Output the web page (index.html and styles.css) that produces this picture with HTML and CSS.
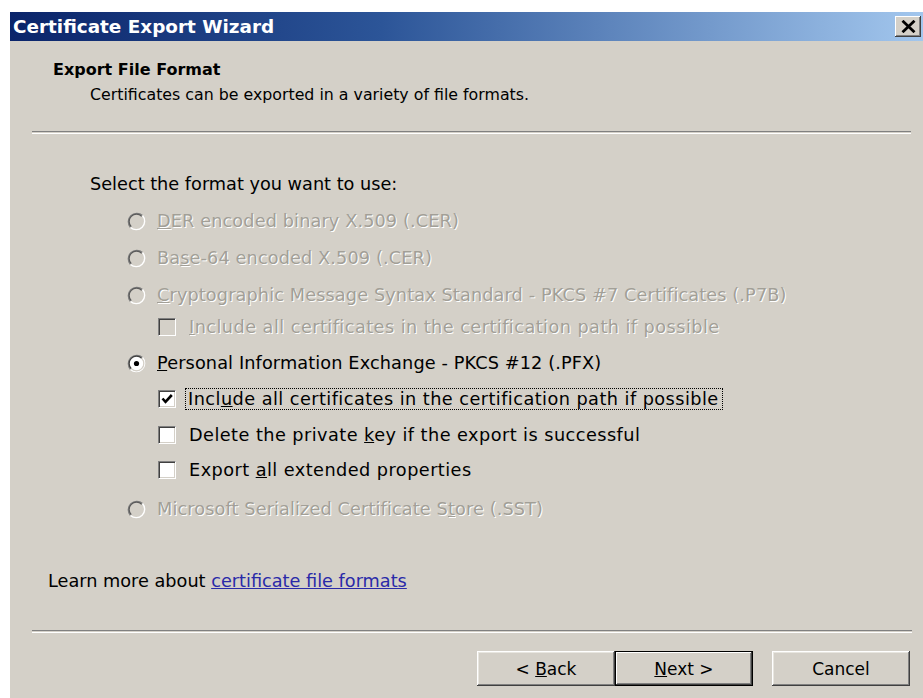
FILE: index.html
```html
<!DOCTYPE html>
<html>
<head>
<meta charset="utf-8">
<title>Certificate Export Wizard</title>
<link rel="stylesheet" href="styles.css">
</head>
<body>
<svg class="defs" width="0" height="0" aria-hidden="true">
  <defs>
    <symbol id="radio-off" viewBox="0 0 19 19">
      <circle cx="9.5" cy="9.5" r="7" fill="#d4d0c8"/>
      <path d="M3.5 15.5 A8.5 8.5 0 0 1 15.5 3.5" fill="none" stroke="#808080" stroke-width="1.4"/>
      <path d="M15.5 3.5 A8.5 8.5 0 0 1 3.5 15.5" fill="none" stroke="#ffffff" stroke-width="1.4"/>
      <path d="M4.3 14.7 A7.3 7.3 0 0 1 14.7 4.3" fill="none" stroke="#5a5a5a" stroke-width="1.2"/>
    </symbol>
    <symbol id="radio-on" viewBox="0 0 19 19">
      <circle cx="9.5" cy="9.5" r="7" fill="#ffffff"/>
      <path d="M3.5 15.5 A8.5 8.5 0 0 1 15.5 3.5" fill="none" stroke="#808080" stroke-width="1.4"/>
      <path d="M15.5 3.5 A8.5 8.5 0 0 1 3.5 15.5" fill="none" stroke="#ffffff" stroke-width="1.4"/>
      <path d="M4.3 14.7 A7.3 7.3 0 0 1 14.7 4.3" fill="none" stroke="#404040" stroke-width="1.2"/>
      <path d="M14.7 4.3 A7.3 7.3 0 0 1 4.3 14.7" fill="none" stroke="#d4d0c8" stroke-width="1.2"/>
      <circle cx="9.5" cy="9.5" r="2.6" fill="#000"/>
    </symbol>
  </defs>
</svg>

<div class="window">
  <div class="titlebar">
    <span class="title">Certificate Export Wizard</span>
    <span class="close">
      <svg width="15" height="13" viewBox="0 0 15 13"><path d="M1.5 0.8 L13.5 12.2 M13.5 0.8 L1.5 12.2" stroke="#000" stroke-width="2.8"/></svg>
    </span>
  </div>

  <div class="header">
    <div class="header-title">Export File Format</div>
    <div class="header-desc">Certificates can be exported in a variety of file formats.</div>
  </div>
  <div class="etched"></div>

  <div class="content">
    <div class="prompt">Select the format you want to use:</div>

    <div class="option radio disabled">
      <svg class="radio-icon"><use href="#radio-off"/></svg>
      <span class="label"><u>D</u>ER encoded binary X.509 (.CER)</span>
    </div>
    <div class="option radio disabled">
      <svg class="radio-icon"><use href="#radio-off"/></svg>
      <span class="label">Ba<u>s</u>e-64 encoded X.509 (.CER)</span>
    </div>
    <div class="option radio disabled">
      <svg class="radio-icon"><use href="#radio-off"/></svg>
      <span class="label"><u>C</u>ryptographic Message Syntax Standard - PKCS #7 Certificates (.P7B)</span>
    </div>
    <div class="option check disabled">
      <span class="checkbox off"></span>
      <span class="label"><u>I</u>nclude all certificates in the certification path if possible</span>
    </div>
    <div class="option radio">
      <svg class="radio-icon"><use href="#radio-on"/></svg>
      <span class="label"><u>P</u>ersonal Information Exchange - PKCS #12 (.PFX)</span>
    </div>
    <div class="option check">
      <span class="checkbox">
        <svg width="14" height="14" viewBox="0 0 14 14"><path d="M2.5 6.5 L5.5 9.8 L11.8 3" fill="none" stroke="#000" stroke-width="2.6"/></svg>
      </span>
      <span class="label focus">Incl<u>u</u>de all certificates in the certification path if possible</span>
    </div>
    <div class="option check">
      <span class="checkbox"></span>
      <span class="label">Delete the private <u>k</u>ey if the export is successful</span>
    </div>
    <div class="option check tight">
      <span class="checkbox"></span>
      <span class="label">Export <u>a</u>ll extended properties</span>
    </div>
    <div class="option radio disabled last">
      <svg class="radio-icon"><use href="#radio-off"/></svg>
      <span class="label">Microsoft Serialized Certificate S<u>t</u>ore (.SST)</span>
    </div>

    <div class="learn">Learn more about <a href="#" class="link">certificate file formats</a></div>
  </div>

  <div class="etched bottom"></div>

  <div class="buttons">
    <button class="btn">&lt; <u>B</u>ack</button>
    <button class="btn default"><u>N</u>ext &gt;</button>
    <button class="btn cancel">Cancel</button>
  </div>
</div>
</body>
</html>
```

FILE: styles.css
```css
html, body {
  margin: 0;
  padding: 0;
  background: #ffffff;
  overflow: hidden;
}

.defs {
  position: absolute;
  width: 0;
  height: 0;
}

.window {
  margin: 12px 0 0 10px;
  width: 930px;
  height: 700px;
  background: #d4d0c8;
  font-family: "DejaVu Sans", "Liberation Sans", sans-serif;
  font-size: 17.7px;
  color: #000;
}

.titlebar {
  height: 29px;
  display: flex;
  align-items: center;
  background: linear-gradient(to right, #0a246a 0%, #2c5598 40%, #a6caf0 100%);
  padding-left: 3px;
}

.title {
  color: #fff;
  font-weight: bold;
  font-size: 18.4px;
  flex: 1;
}

.close {
  width: 26px;
  height: 21px;
  margin-right: 19px;
  background: #d4d0c8;
  box-shadow: inset -1px -1px #404040, inset 1px 1px #ffffff, inset -2px -2px #808080;
  display: flex;
  align-items: center;
  justify-content: center;
}

.header {
  padding: 19px 0 0 43px;
}

.header-title {
  font-weight: bold;
  font-size: 16px;
  line-height: 20px;
}

.header-desc {
  margin: 5px 0 0 37px;
  font-size: 15.8px;
  line-height: 20px;
}

.etched {
  margin: 26px 0 0 22px;
  width: 879px;
  height: 1px;
  border-top: 1px solid #808080;
  border-bottom: 1px solid #ffffff;
}

.etched.bottom {
  margin-top: 39px;
  width: 880px;
}

.content {
  padding-left: 38px;
}

.prompt {
  margin: 40px 0 0 42px;
  line-height: 20px;
}

.option {
  display: flex;
  align-items: center;
  height: 20px;
  margin-top: 16px;
}

.option.radio.disabled {
  margin-top: 17px;
}

.option.check.disabled {
  margin-top: 12px;
}

.option.tight {
  margin-top: 15px;
}

.option.radio.last {
  margin-top: 19px;
}

.option.radio {
  padding-left: 79px;
}

.option.check {
  padding-left: 110px;
}

.radio-icon {
  width: 19px;
  height: 19px;
  margin-right: 11px;
  flex: none;
}

.checkbox {
  width: 16px;
  height: 16px;
  background: #fff;
  border: 1px solid;
  border-color: #808080 #ffffff #ffffff #808080;
  box-shadow: inset 1px 1px #404040, inset -1px -1px #d4d0c8;
  margin-right: 13px;
  display: flex;
  align-items: center;
  justify-content: center;
  flex: none;
}

.checkbox.off {
  background: #d4d0c8;
}

.label {
  white-space: nowrap;
  line-height: 20px;
}

.radio .label {
  letter-spacing: 0.12px;
}

.check .label {
  letter-spacing: 0.45px;
}

.label.focus {
  outline: 1px dotted #000;
  outline-offset: 0;
  padding: 0 3px 0 2px;
  margin-left: -3px;
}

.disabled .label {
  color: #a29f97;
  text-shadow: 1px 1px 0 #ffffff;
}

.learn {
  margin-top: 52px;
  line-height: 20px;
}

.link {
  color: #2a2aa8;
  text-decoration: underline;
}

.buttons {
  display: flex;
  margin: 18px 0 0 467px;
}

.btn {
  width: 138px;
  height: 35px;
  background: #d4d0c8;
  border: none;
  padding: 0;
  font-family: "DejaVu Sans", "Liberation Sans", sans-serif;
  font-size: 17px;
  color: #000;
  box-shadow: inset -1px -1px #404040, inset 1px 1px #ffffff, inset -2px -2px #808080, inset 2px 2px #e8e6e0;
}

.btn.default {
  box-shadow: inset 0 0 0 1px #000, inset -2px -2px #404040, inset 2px 2px #ffffff, inset -3px -3px #808080;
}

.btn.cancel {
  margin-left: 19px;
}
```
